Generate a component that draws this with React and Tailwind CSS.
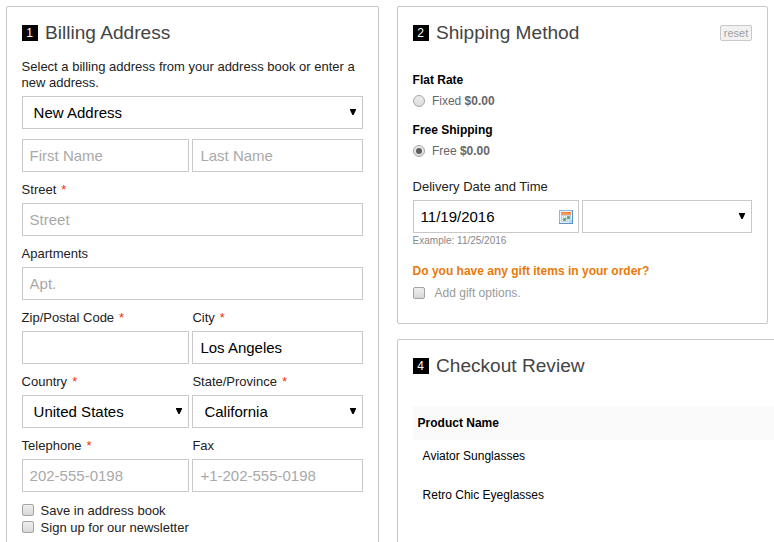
import React from "react";

const Heading = ({ number, children }) => (
  <div className="flex h-[22px] items-center">
    <span className="h-4 w-4 bg-black text-center text-[12px] leading-4 text-white">{number}</span>
    <h2 className="ml-[7.4px] text-[19.1px] leading-[22px] text-[#444]">{children}</h2>
  </div>
);

const Label = ({ children, required }) => (
  <div className="pt-[10px] pb-[5px] text-[13px] leading-4 text-[#222]">
    {children}
    {required && <span className="ml-[5px] text-[#eb340a]">*</span>}
  </div>
);

const Arrow = () => (
  <svg className="mb-[1px] h-[6px] w-[6px]" viewBox="0 0 6 6">
    <path d="M0 0H6V1L3.6 6H2.4L0 1Z" fill="#000" />
  </svg>
);

const Select = ({ value }) => (
  <div className="flex h-[33px] items-center justify-between border border-[#c8c8c8] bg-white pr-[6px] pl-[11px] text-[15px] leading-[17px] text-black">
    <span>{value}</span>
    <Arrow />
  </div>
);

const Input = ({ value = "", placeholder }) => (
  <input
    className="block h-[33px] w-full border border-[#c8c8c8] bg-white px-[7px] text-[15px] leading-[17px] text-black outline-none placeholder:text-[#a9a9a9]"
    value={value}
    placeholder={placeholder}
    readOnly
  />
);

const Row = ({ children }) => (
  <div className="grid grid-cols-[167px_170.6px] gap-x-[3.8px]">{children}</div>
);

const Checkbox = () => (
  <span className="block h-3 w-3 shrink-0 rounded-[2px] border border-[#a3a3a3] bg-linear-to-b from-[#eeeeee] to-[#d9d9d9]" />
);

const Radio = ({ checked }) => (
  <span className="flex h-3 w-3 shrink-0 items-center justify-center rounded-full border border-[#a5a5a5] bg-linear-to-b from-[#eeeeee] to-[#dcdcdc]">
    {checked && <span className="h-[6px] w-[6px] rounded-full bg-[#615b60]" />}
  </span>
);

const Method = ({ title, name, checked }) => (
  <div>
    <h3 className="text-[12px] leading-4 font-bold text-black">{title}</h3>
    <div className="mt-[5px] flex h-4 items-center text-[12px] leading-4 text-[#666]">
      <Radio checked={checked} />
      <span className="ml-[7.3px]">
        {name} <b>$0.00</b>
      </span>
    </div>
  </div>
);

const Calendar = () => (
  <svg className="h-[14px] w-[14px]" viewBox="0 0 14 14" shapeRendering="crispEdges">
    <rect width="14" height="14" fill="#5b91c9" />
    <rect width="13" height="1" fill="#8db5df" />
    <rect width="1" height="13" fill="#8db5df" />
    <rect x="1" y="1" width="12" height="12" fill="#eaf4fc" />
    <rect x="2" y="2" width="10" height="3" fill="#fc9a55" />
    <rect x="2" y="2" width="10" height="1" fill="#f58338" />
    <rect x="10" y="2" width="1" height="1" fill="#d94d25" />
    <path d="M2 5h10v7H2z" fill="#bcd0ea" />
    <path d="M3 6h1v1H3zM5 6h1v1H5zM7 6h1v1H7zM3 8h1v1H3zM5 7h1v1H5zM3 10h1v1H3zM7 10h1v1H7zM9 10h1v1H9z" fill="#fff" />
    <path d="M8 6h3v3H8zM4 8h3v3H4z" fill="#76b878" />
    <path d="M9 7h1v1H9zM5 9h1v1H5z" fill="#3d914c" />
    <path d="M12 10h1v3h-3v-1h1v-1h1z" fill="#b8d8f4" />
  </svg>
);

export default function App() {
  return (
    <div className="flex h-[542px] w-[774px] items-start gap-[18px] overflow-hidden bg-white pt-[6px] pl-[6px] font-['Liberation_Sans',Arial,sans-serif]">
      <section className="h-[560px] w-[373px] shrink-0 rounded-[2px] border border-[#c8c8c8] pt-[15px] pr-[15px] pl-[14.6px]">
        <Heading number="1">Billing Address</Heading>
        <p className="mt-[15px] mb-[5px] text-[13px] leading-4 text-[#222]">
          Select a billing address from your address book or enter a<br />
          new address.
        </p>
        <Select value="New Address" />
        <div className="mt-[10px]">
          <Row>
            <Input placeholder="First Name" />
            <Input placeholder="Last Name" />
          </Row>
        </div>
        <Label required>Street</Label>
        <Input placeholder="Street" />
        <Label>Apartments</Label>
        <Input placeholder="Apt." />
        <Row>
          <Label required>Zip/Postal Code</Label>
          <Label required>City</Label>
          <Input />
          <Input value="Los Angeles" />
          <Label required>Country</Label>
          <Label required>State/Province</Label>
          <Select value="United States" />
          <Select value="California" />
          <Label required>Telephone</Label>
          <Label>Fax</Label>
          <Input placeholder="202-555-0198" />
          <Input placeholder="+1-202-555-0198" />
        </Row>
        <div className="mt-[9px] text-[13px] leading-[17px] text-[#222]">
          <div className="flex h-[17px] items-center gap-[7px]">
            <Checkbox />
            <span className="pt-[2px]">Save in address book</span>
          </div>
          <div className="flex h-[17px] items-center gap-[7px]">
            <Checkbox />
            <span className="pt-[2px]">Sign up for our newsletter</span>
          </div>
        </div>
      </section>

      <div className="flex shrink-0 flex-col gap-[15px]">
        <section className="h-[318px] w-[371px] rounded-[2px] border border-[#c8c8c8] pt-[15px] pr-[15px] pl-[14.6px]">
          <div className="flex items-center justify-between">
            <Heading number="2">Shipping Method</Heading>
            <button className="h-4 w-8 rounded-[2px] border border-[#c8c8c8] bg-[#f2f2f2] text-[11px] leading-[14px] text-[#a0a0a0]">
              reset
            </button>
          </div>
          <div className="mt-7 flex flex-col gap-[13px]">
            <Method title="Flat Rate" name="Fixed" />
            <Method title="Free Shipping" name="Free" checked />
          </div>
          <p className="mt-5 mb-[5px] text-[13px] leading-4 text-[#222]">Delivery Date and Time</p>
          <div className="grid grid-cols-[166px_170px] gap-x-[3.4px]">
            <div className="flex h-[33px] items-center justify-between border border-[#c8c8c8] pr-[4.6px] pl-[7px] text-[15px] leading-[17px] text-black">
              <span>11/19/2016</span>
              <Calendar />
            </div>
            <Select value="" />
          </div>
          <p className="mt-[1px] text-[10px] leading-[13px] text-[#888]">Example: 11/25/2016</p>
          <p className="mt-4 text-[12px] leading-4 font-bold text-[#e87a0c]">
            Do you have any gift items in your order?
          </p>
          <div className="mt-[6px] flex h-4 items-center text-[12px] leading-4 text-[#999]">
            <Checkbox />
            <span className="ml-[10px]">Add gift options.</span>
          </div>
        </section>

        <section className="h-[230px] w-[400px] rounded-[2px] border border-[#c8c8c8] pt-[15px] pr-[15px] pl-[14.6px]">
          <Heading number="4">Checkout Review</Heading>
          <div className="mt-[29px] text-[12px] leading-4 text-black">
            <div className="h-[34px] bg-[#fafafa] pt-[9px] pl-[5px] font-bold">Product Name</div>
            <div className="h-[39px] pt-2 pl-[10px]">Aviator Sunglasses</div>
            <div className="h-[39px] pt-2 pl-[10px]">Retro Chic Eyeglasses</div>
          </div>
        </section>
      </div>
    </div>
  );
}
